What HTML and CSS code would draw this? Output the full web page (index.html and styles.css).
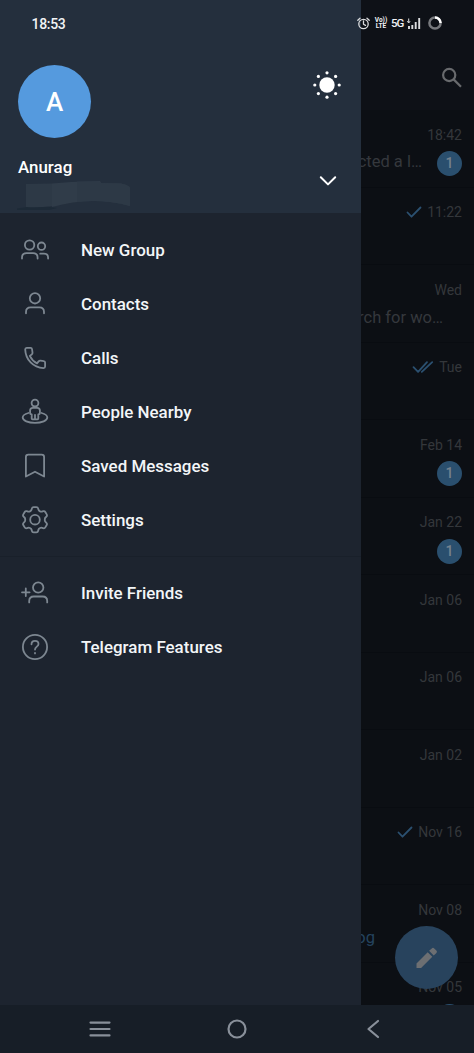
FILE: index.html
```html
<!DOCTYPE html>
<html lang="en">
<head>
<meta charset="utf-8">
<title>Telegram</title>
<link rel="stylesheet" href="styles.css">
</head>
<body>
<div class="screen">
  <main class="app">
    <section class="chats">
      <header class="toolbar">
        <svg class="search" width="22" height="22" viewBox="0 0 22 22"><circle cx="8.2" cy="8" r="6.1"/><path d="M12.6 12.4L20 19.8"/></svg>
      </header>
      <ul class="list">
        <li class="chat"><div class="meta"><time>18:42</time></div><div class="line"><span class="msg">ected a l…</span><b class="badge">1</b></div></li>
        <li class="chat"><div class="meta"><svg class="tick" width="16" height="14" viewBox="0 0 16 14"><path d="M1.5 7.5l4 4.2L14.5 2.5"/></svg><time>11:22</time></div></li>
        <li class="chat"><div class="meta"><time>Wed</time></div><div class="line"><span class="msg wide">rch for wo…</span></div></li>
        <li class="chat"><div class="meta"><svg class="tick" width="22" height="14" viewBox="0 0 22 14"><path d="M1.5 7.2l4.6 4.6L15 2.2M9.8 11.8L20.2 2.2"/></svg><time>Tue</time></div></li>
        <li class="chat"><div class="meta"><time>Feb 14</time></div><div class="line"><b class="badge">1</b></div></li>
        <li class="chat"><div class="meta"><time>Jan 22</time></div><div class="line"><b class="badge">1</b></div></li>
        <li class="chat"><div class="meta"><time>Jan 06</time></div></li>
        <li class="chat"><div class="meta"><time>Jan 06</time></div></li>
        <li class="chat"><div class="meta"><time>Jan 02</time></div></li>
        <li class="chat"><div class="meta"><svg class="tick" width="16" height="14" viewBox="0 0 16 14"><path d="M1.5 7.5l4 4.2L14.5 2.5"/></svg><time>Nov 16</time></div></li>
        <li class="chat"><div class="meta"><time>Nov 08</time></div><div class="line"><span class="msg link">og</span></div></li>
        <li class="chat"><div class="meta"><time>Nov 05</time></div><div class="line"><b class="badge"></b></div></li>
      </ul>
      <div class="fab">
        <svg width="24" height="24" viewBox="0 0 24 24"><path d="M1.500 17.400V22h4.600L17.300 10.800l-4.600-4.600zM18.700 9.400l2.700-2.400a1.700 1.700 0 0 0 0-2.400l-2.200-2.200a1.700 1.700 0 0 0-2.400 0L14.100 4.800z"/></svg>
      </div>
    </section>

    <aside class="drawer">
      <header class="profile">
        <div class="top">
          <div class="avatar">A</div>
          <svg class="sun" width="28" height="28" viewBox="0 0 28 28"><circle cx="14" cy="14" r="7.700"/><circle cx="14" cy="1.800" r="1.600"/><circle cx="14" cy="26.200" r="1.600"/><circle cx="1.800" cy="14" r="1.600"/><circle cx="26.200" cy="14" r="1.600"/><circle cx="5.400" cy="5.400" r="1.600"/><circle cx="22.600" cy="5.400" r="1.600"/><circle cx="5.400" cy="22.600" r="1.600"/><circle cx="22.600" cy="22.600" r="1.600"/></svg>
        </div>
        <div class="account">
          <div class="who">
            <div class="name">Anurag</div>
            <svg class="redacted" width="116" height="32" viewBox="0 0 116 32"><path d="M0 29.500Q20 26 40 29l-8 2H0z" fill="#1d2a37"/><path d="M9 5l26-.5V27q-14 2-26 1z" fill="#2d3946"/><path d="M35 4.500L54 3l29-1 1 2 20 .5q9 2 9 4.500v18q-18-5-37-5-20 0-41 6z" fill="#303c49"/><path d="M60 2.500h22l2 1.500 20 .5q9 2 9 4.500v18q-18-5-37-5-8 0-16 1z" fill="#2d3946"/></svg>
          </div>
          <svg class="chevron" width="18" height="12" viewBox="0 0 18 12"><path d="M1.800 2.200L9 9.400l7.200-7.200"/></svg>
        </div>
      </header>
      <nav>
        <ul class="menu">
          <li><svg viewBox="0 0 30 30"><circle cx="9.600" cy="10" r="4.700"/><circle cx="21.500" cy="11.200" r="3.700"/><path d="M2 23.500v-.8c0-2.700 1.800-4.500 4.500-4.500h6.600c2.700 0 4.500 1.800 4.500 4.500v.8M20.200 18.700h3.600c2.700 0 4.300 1.500 4.300 4v.8"/></svg>New Group</li>
          <li><svg viewBox="0 0 30 30"><circle cx="15" cy="9.300" r="5.200"/><path d="M6 24.300v-1.300c0-2.700 1.800-4.600 4.600-4.600h8.800c2.800 0 4.600 1.900 4.600 4.600v1.300"/></svg>Contacts</li>
          <li><svg viewBox="0 0 30 30"><path d="M6.700 4.800h3.900c.8 0 1.300.4 1.400 1.200l.5 3.600c.1.800-.2 1.500-.8 1.900l-1.900 1.400c1.700 3.500 3.700 5.700 7.200 7.500l1.600-2c.5-.6 1.100-.8 1.900-.7l3.300.5c.8.1 1.300.6 1.300 1.400v4c0 1-.6 1.500-1.600 1.500C13.200 24.600 5.600 16.800 5.200 6.400c0-1 .5-1.600 1.500-1.600z"/></svg>Calls</li>
          <li><svg viewBox="0 0 30 30"><circle cx="15" cy="6.100" r="3.400"/><path d="M12.800 10.800h4.400c1.700 0 2.700 1.100 2.700 2.800v2.200c0 1.200-.7 1.600-1.600 1.600v4.100c0 .6-.3.900-.9.900h-4.800c-.6 0-.9-.3-.9-.9v-4.100c-.9 0-1.600-.4-1.600-1.600v-2.200c0-1.700 1-2.800 2.700-2.800zM15 18v4"/><path d="M8.500 16C5 16.900 2.700 18.500 2.700 20.500c0 3.100 5.500 5.300 12.300 5.300s12.300-2.200 12.300-5.300c0-2-2.300-3.600-5.800-4.500"/></svg>People Nearby</li>
          <li><svg viewBox="0 0 30 30"><path d="M8.300 3.700h13.400c1.600 0 2.400.9 2.400 2.400v19.400L15 20.700l-9.100 4.800V6.100c0-1.500.8-2.400 2.400-2.400z"/></svg>Saved Messages</li>
          <li><svg viewBox="0 0 30 30"><g transform="translate(0 -.3)"><circle cx="15" cy="15" r="4.800"/><path d="M13.600 2.400h2.800q1.400 0 1.700 1.300l.3 1.200q.3 1 1.200 1.500l.5.300q.9.500 1.900.2l1.200-.4q1.400-.4 2.100.8l1.400 2.400q.7 1.200-.3 2.200l-.9.900q-.7.700-.7 1.700v1q0 1 .7 1.700l.9.900q1 1 .3 2.200l-1.400 2.400q-.7 1.200-2.100.8l-1.200-.4q-1-.3-1.900.2l-.5.300q-.9.500-1.200 1.500l-.3 1.200q-.3 1.300-1.700 1.300h-2.800q-1.400 0-1.700-1.300l-.3-1.200q-.3-1-1.200-1.500l-.5-.3q-.9-.5-1.900-.2l-1.200.4q-1.400.4-2.100-.8l-1.400-2.400q-.7-1.200.3-2.200l.9-.9q.7-.7.7-1.700v-1q0-1-.7-1.700l-.9-.9q-1-1-.3-2.200l1.400-2.400q.7-1.200 2.100-.8l1.200.4q1 .3 1.900-.2l.5-.3q.9-.5 1.200-1.500l.3-1.200q.3-1.300 1.700-1.300z"/></g></svg>Settings</li>
        </ul>
        <ul class="menu extra">
          <li><svg viewBox="0 0 30 30"><circle cx="18.200" cy="9.500" r="5.200"/><path d="M9.200 24.400v-1.300c0-2.700 1.800-4.600 4.600-4.600h8.800c2.800 0 4.600 1.900 4.600 4.600v1.300M2 14.300h7.600M5.800 10.500v7.600"/></svg>Invite Friends</li>
          <li><svg viewBox="0 0 30 30"><circle cx="15" cy="15" r="12.100"/><path d="M11.500 12.300c0-2.200 1.500-3.500 3.500-3.500s3.500 1.300 3.500 3.200c0 2.600-3.500 2.700-3.500 5.600M15 20.800v.6"/></svg>Telegram Features</li>
        </ul>
      </nav>
    </aside>

    <div class="status">
      <span class="clock">18:53</span>
      <div class="signals">
        <svg width="13" height="13" viewBox="0 0 13 13" class="alarm"><circle cx="6.500" cy="7" r="4.700"/><path d="M6.500 4v3.200l2 1.200M.8 3.200L3 1.200M12.200 3.200L10 1.200"/></svg>
        <span class="volte"><span>Vo))</span><span>LTE</span></span>
        <span class="net">5G</span>
        <svg width="14" height="13" viewBox="0 0 14 13" class="bars"><path d="M2 9v3M5.300 8v4M8.700 5v7M12.200 1v11"/><path d="M1.700 1.500v4M.3 4.200L1.700 6l1.400-1.800" class="thin"/></svg>
        <svg width="14" height="14" viewBox="0 0 14 14" class="battery"><circle cx="7" cy="7" r="5.600"/><path d="M7 1.400A5.600 5.600 0 0 1 12.600 7"/></svg>
      </div>
    </div>
  </main>

  <footer class="navbar">
    <svg width="22" height="18" viewBox="0 0 22 18"><path d="M1.500 2.600h19M1.500 9h19M1.500 15.400h19"/></svg>
    <svg class="home" width="20" height="20" viewBox="0 0 20 20"><circle cx="10" cy="10" r="8.500"/></svg>
    <svg width="14" height="20" viewBox="0 0 14 20"><path d="M12 2L2.500 10l9.500 8"/></svg>
  </footer>
</div>
</body>
</html>
```
FILE: styles.css
```css
* { box-sizing: border-box; }
body { margin: 0; background: #0c0f14; font-family: Roboto, "Noto Sans", sans-serif; }
ul { list-style: none; margin: 0; padding: 0; }
svg { display: block; flex: none; fill: none; stroke-linecap: round; stroke-linejoin: round; }

.screen { width: 474px; height: 1053px; display: flex; flex-direction: column; overflow: hidden; }
.app { position: relative; height: 1005px; overflow: hidden; background: #0c0f14; }

/* Chat list, dimmed behind the drawer */
.toolbar { height: 110px; display: flex; justify-content: flex-end; padding: 67px 11px 0 0; background: #0e1117; }
.search { stroke: #686a6d; stroke-width: 2.2; stroke-linecap: butt; }
.chat { height: 77.500px; padding: 14.500px 12px 0 0; border-bottom: 1px solid #090c11; }
.meta { height: 20px; display: flex; justify-content: flex-end; align-items: center; gap: 5px; font-size: 14px; line-height: 20px; color: #34373b; }
.tick { stroke: #2b5070; stroke-width: 1.800; }
.line { height: 26px; margin-top: 6px; display: flex; justify-content: flex-end; align-items: center; gap: 15px; }
.msg { font-size: 16.500px; line-height: 26px; color: #35383d; position: relative; top: -2px; }
.wide { margin-right: 19px; top: -1px; }
.link { margin-right: 87px; color: #24435e; top: -1px; }
.badge { width: 25px; height: 25px; border-radius: 50%; background: #2a4f6e; color: #74828e; font-size: 14px; font-weight: 500; line-height: 25px; text-align: center; }
.fab { position: absolute; left: 395px; top: 926px; width: 63px; height: 63px; border-radius: 50%; background: #28435d; display: flex; align-items: center; justify-content: center; }
.fab svg { fill: #6d6f72; }

/* Side drawer */
.drawer { position: absolute; left: 0; top: 0; width: 361px; height: 100%; background: #1d242f; }
.profile { height: 213px; padding: 65px 19px 0 18px; background: #242f3d; }
.top { display: flex; justify-content: space-between; align-items: flex-start; }
.avatar { width: 73px; height: 73px; border-radius: 50%; background: #559ade; color: #fff; font-size: 26px; font-weight: 500; line-height: 74px; text-align: center; }
.sun { margin: 6px 1px 0 0; fill: #fff; }
.account { display: flex; justify-content: space-between; margin-top: 18px; }
.name { font-size: 16.900px; font-weight: 500; line-height: 22px; color: #fff; }
.redacted { margin: 1px 0 0 -1px; }
.chevron { margin: 19px 5px 0 0; stroke: #fff; stroke-width: 2; }
.menu { padding: 9.500px 0 8.500px; }
.menu li { height: 54.150px; display: flex; align-items: center; gap: 31px; padding-left: 20px; color: #f3f6f8; font-size: 16.950px; font-weight: 500; }
.menu svg { width: 30px; height: 30px; stroke: #7d8791; stroke-width: 1.800; }
.extra { padding-top: 9px; border-top: 1px solid #19202a; }

/* System bars */
.status { position: absolute; inset: 0 0 auto 0; height: 46px; display: flex; align-items: center; justify-content: space-between; padding: 0 32px 0 31.500px; color: #f1f3f5; }
.clock { font-size: 14px; font-weight: 500; padding-top: 2px; letter-spacing: -.3px; }
.signals { display: flex; align-items: center; gap: 4px; }
.signals svg { stroke: #dcdddf; stroke-width: 1.300; }
.volte { width: 12px; margin-left: 1px; display: flex; flex-direction: column; align-items: center; font-size: 6.500px; font-weight: 700; line-height: 6px; }
.net { width: 12px; font-size: 11.500px; font-weight: 500; line-height: 14px; letter-spacing: -1px; white-space: nowrap; }
.signals .bars { stroke-width: 1.900; stroke-linecap: butt; }
.bars .thin { stroke-width: 1; }
.signals .battery { margin-left: 3px; stroke: #77797d; stroke-width: 2.500; }
.battery path { stroke: #fff; stroke-linecap: butt; }
.navbar { height: 48px; display: flex; justify-content: space-between; align-items: center; padding: 0 94px 0 89px; background: #171e27; }
.navbar svg { stroke: #89909a; stroke-width: 2.200; }
.navbar .home { margin-right: 3px; }
```
